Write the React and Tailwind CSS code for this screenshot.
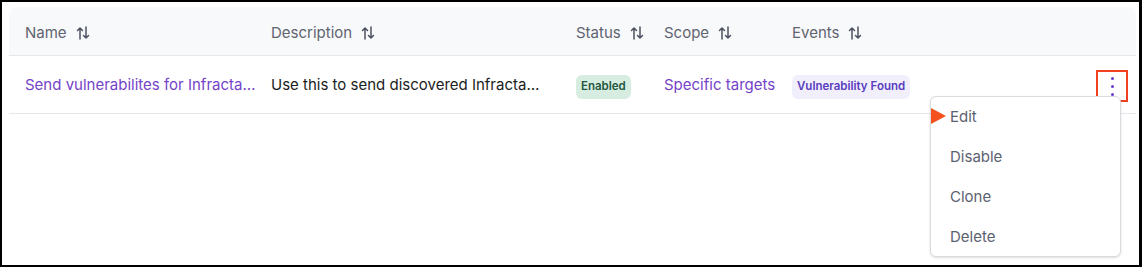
const cols = 'grid grid-cols-[232px_291px_74px_114px_1fr_40px] gap-x-[14px] items-center';

function SortIcon() {
  return (
    <svg width="14" height="14" viewBox="0 0 14 14" fill="none" stroke="#4b5160" strokeWidth="1.5" strokeLinecap="round" strokeLinejoin="round">
      <path d="M4 2v11M1.5 4.5 4 2l2.5 2.5" />
      <path d="M10 1v11M7.5 9.5 10 12l2.5-2.5" />
    </svg>
  );
}

function SortHead({ label }) {
  return (
    <div className="flex items-center gap-[9px] text-[15px] text-[#5f6470]">
      {label}
      <SortIcon />
    </div>
  );
}

export default function App() {
  return (
    <div className="w-[1142px] h-[267px] bg-black p-[2px] pr-[3px]" style={{ fontFamily: 'Inter, "Noto Sans", sans-serif' }}>
      <div className="relative h-full bg-white pt-[5px] px-[7px] pr-[3px]">
        <div className="rounded-t-lg">
          {/* header */}
          <div className={`${cols} h-[49px] pt-[4px] pl-4 bg-[#f8f9fb] rounded-t-lg border-b border-[#e6e7ea]`}>
            <SortHead label="Name" />
            <SortHead label="Description" />
            <SortHead label="Status" />
            <SortHead label="Scope" />
            <SortHead label="Events" />
            <div />
          </div>

          {/* row */}
          <div className={`${cols} h-[58px] pt-[2px] pl-4 border-b border-[#e6e7ea]`}>
            <div className="truncate text-[15px] text-[#7443c8]">Send vulnerabilites for Infracta vulnerability findings</div>
            <div className="truncate text-[15px] text-[#1b1d22] pr-5">Use this to send discovered Infracta vulnerabilities</div>
            <div>
              <span className="inline-flex items-center h-6 px-[5px] rounded-md bg-[#d8ede1] text-[11.5px] font-semibold text-[#22573f]">Enabled</span>
            </div>
            <div className="text-[15px] text-[#7443c8] whitespace-nowrap">Specific targets</div>
            <div>
              <span className="inline-flex items-center h-6 px-[5px] rounded-md bg-[#f1effc] text-[11.5px] font-semibold text-[#5a3cc0]">Vulnerability Found</span>
            </div>
            <div className="flex justify-end pr-[8px]">
              <button className="w-8 h-8 mt-[1px] flex flex-col items-center justify-center gap-[5px] border-2 border-[#f0401f]">
                <span className="w-[3px] h-[3px] rounded-full bg-[#6a3cd0]" />
                <span className="w-[3px] h-[3px] rounded-full bg-[#6a3cd0]" />
                <span className="w-[3px] h-[3px] rounded-full bg-[#6a3cd0]" />
              </button>
            </div>
          </div>
        </div>

        {/* dropdown menu */}
        <div className="absolute left-[928px] top-[94px] w-[191px] h-[161px] bg-white border border-[#d9dbe0] rounded-md shadow-sm">
          {['Edit', 'Disable', 'Clone', 'Delete'].map(item => (
            <div key={item} className="h-10 flex items-center pl-[19px] text-[15px] text-[#5c6170]">{item}</div>
          ))}
        </div>
        {/* pointer annotation */}
        <svg className="absolute left-[929px] top-[106px]" width="15" height="16" viewBox="0 0 15 16">
          <polygon points="0,0 15,8 0,16" fill="#f4511e" />
        </svg>
      </div>
    </div>
  );
}
